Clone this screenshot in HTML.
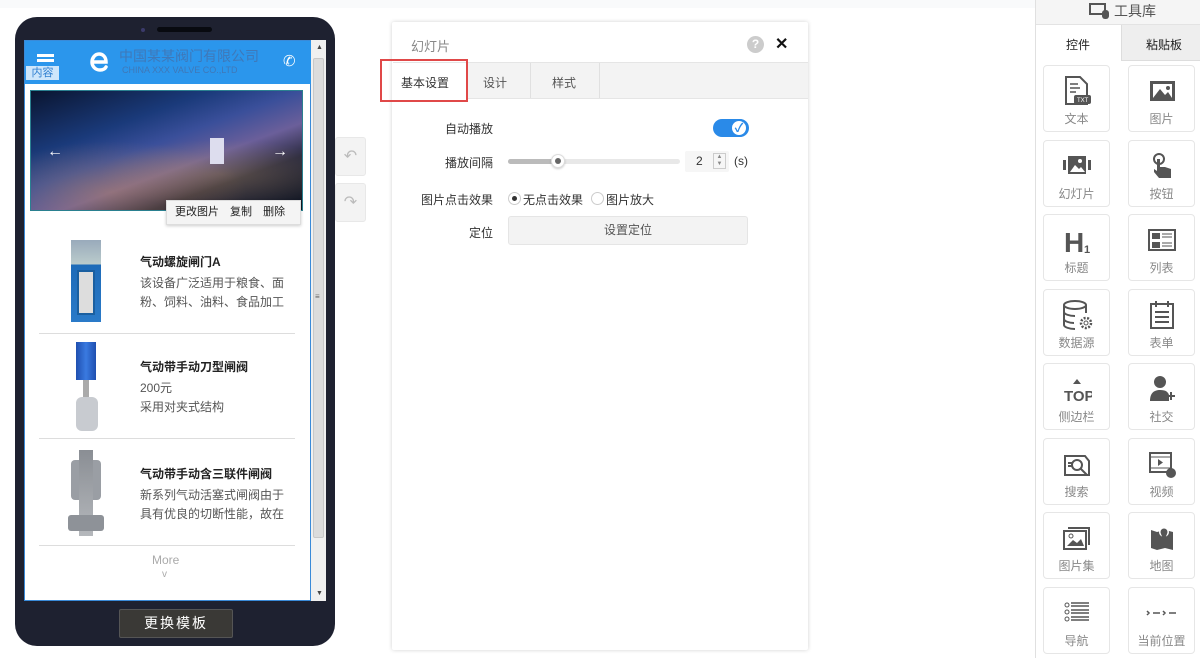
<!DOCTYPE html><html><head><meta charset="utf-8"><style>
*{margin:0;padding:0;box-sizing:border-box}
body{width:1200px;height:658px;position:relative;background:#fff;font-family:"Liberation Sans","Noto Sans CJK SC",sans-serif;overflow:hidden;color:#333}
.a{position:absolute}
.cell{position:absolute;width:67px;height:67px;border:1px solid #e6e6e6;border-radius:4px;background:#fff;text-align:center}
.cell .l{position:absolute;left:0;right:0;top:44px;font-size:12px;color:#888}
.cell svg{position:absolute;left:18px;top:9px}
.pt{font-size:12px;font-weight:bold;color:#222}
.pd{font-size:12px;color:#555;line-height:19px}
.lab{font-size:12px;color:#333;text-align:right;width:90px}
</style></head><body>
<div class="a" style="left:0;top:0;width:1035px;height:8px;background:#f9fafb"></div>
<!-- phone -->
<div class="a" style="left:15px;top:17px;width:320px;height:629px;background:#1e2130;border-radius:22px"></div>
<div class="a" style="left:157px;top:27px;width:55px;height:5px;background:#080a10;border-radius:3px"></div>
<div class="a" style="left:141px;top:28px;width:4px;height:4px;background:#3b3a6a;border-radius:50%"></div>
<div class="a" style="left:24px;top:40px;width:287px;height:561px;background:#fff;border:1px solid #3a8ad8"></div>
<div class="a" style="left:311px;top:40px;width:15px;height:561px;background:#f0f0f0"></div>
<div class="a" style="left:313px;top:58px;width:11px;height:480px;background:#dcdcdc;border-radius:2px;border:1px solid #c8c8c8"></div>
<div class="a" style="left:315px;top:292px;font-size:8px;color:#666">≡</div>
<div class="a" style="left:316px;top:44px;font-size:7px;color:#444">▲</div>
<div class="a" style="left:316px;top:590px;font-size:7px;color:#444">▼</div>
<div class="a" style="left:25px;top:41px;width:286px;height:43px;background:#2b96ec"></div>
<div class="a" style="left:37px;top:54px;width:17px;height:3px;background:#fff;box-shadow:0 5px 0 #fff"></div>
<div class="a" style="left:26px;top:66px;width:33px;height:14px;background:#cde6fb;color:#2e7fd0;font-size:11px;text-align:center;line-height:14px">内容</div>
<svg class="a" style="left:88px;top:49px" width="24" height="24"><path d="M5 13h13c0-5-3-8-7-8s-7 4-7 8 3 8 8 8c3 0 5-1 6-3" fill="none" stroke="#fff" stroke-width="3.5" stroke-linecap="round"/></svg>
<div class="a" style="left:119px;top:46px;font-size:14px;color:#3f78b8">中国某某阀门有限公司</div>
<div class="a" style="left:122px;top:65px;font-size:9px;color:#3f78b8">CHINA XXX VALVE CO.,LTD</div>
<div class="a" style="left:283px;top:52px;font-size:15px;color:#fff">✆</div>
<div class="a" style="left:30px;top:90px;width:273px;height:121px;border:1px solid #2a8090;background:linear-gradient(160deg,#0a1530 0%,#1a3a7a 30%,#3a4f9a 45%,#6b5f9a 60%,#2a2a40 75%,#101520 100%)"></div>
<div class="a" style="left:31px;top:120px;width:271px;height:90px;background:radial-gradient(ellipse at 30% 80%,rgba(220,150,70,.35),transparent 50%),radial-gradient(ellipse at 70% 60%,rgba(200,160,90,.3),transparent 45%)"></div>
<div class="a" style="left:210px;top:138px;width:14px;height:26px;background:#dde"></div>
<div class="a" style="left:47px;top:143px;font-size:16px;color:#fff">←</div>
<div class="a" style="left:272px;top:143px;font-size:16px;color:#fff">→</div>
<div class="a" style="left:166px;top:200px;width:135px;height:25px;background:#f4f4f4;border:1px solid #ddd;box-shadow:0 1px 3px rgba(0,0,0,.2);font-size:11px;color:#222;line-height:23px;padding-left:8px;word-spacing:8px">更改图片 复制 删除</div>
<!-- products -->
<div class="a" style="left:71px;top:240px;width:30px;height:82px;background:linear-gradient(#9ab 0,#bcc 30%,#1e6bb8 30%,#2a7ac8 100%)"></div>
<div class="a" style="left:77px;top:270px;width:18px;height:45px;background:#ddd;border:2px solid #1a5fa0"></div>
<div class="a pt" style="left:140px;top:253px">气动螺旋闸门A</div>
<div class="a pd" style="left:140px;top:274px">该设备广泛适用于粮食、面<br>粉、饲料、油料、食品加工</div>
<div class="a" style="left:39px;top:333px;width:256px;height:1px;background:#ddd"></div>
<div class="a" style="left:76px;top:342px;width:20px;height:38px;background:linear-gradient(90deg,#1f4fb0,#3a7ae0,#1f4fb0)"></div>
<div class="a" style="left:83px;top:380px;width:6px;height:18px;background:#aaa"></div>
<div class="a" style="left:76px;top:397px;width:22px;height:34px;background:#c8cbd0;border-radius:6px"></div>
<div class="a pt" style="left:140px;top:358px">气动带手动刀型闸阀</div>
<div class="a pd" style="left:140px;top:379px">200元<br>采用对夹式结构</div>
<div class="a" style="left:39px;top:438px;width:256px;height:1px;background:#ddd"></div>
<div class="a" style="left:71px;top:460px;width:30px;height:40px;background:#9a9ea4;border-radius:4px"></div>
<div class="a" style="left:79px;top:450px;width:14px;height:86px;background:linear-gradient(#8a8e94,#b5b8bc)"></div>
<div class="a" style="left:68px;top:515px;width:36px;height:16px;background:#8e9298;border-radius:3px"></div>
<div class="a pt" style="left:140px;top:465px">气动带手动含三联件闸阀</div>
<div class="a pd" style="left:140px;top:486px">新系列气动活塞式闸阀由于<br>具有优良的切断性能，故在</div>
<div class="a" style="left:39px;top:545px;width:256px;height:1px;background:#ddd"></div>
<div class="a" style="left:152px;top:553px;font-size:12px;color:#aaa">More</div>
<div class="a" style="left:162px;top:569px;font-size:10px;color:#aaa">v</div>
<div class="a" style="left:119px;top:609px;width:114px;height:29px;background:#3a3936;border:1px solid #555;border-radius:2px;color:#fff;font-size:14px;text-align:center;line-height:27px;letter-spacing:2px">更换模板</div>
<!-- undo redo -->
<div class="a" style="left:335px;top:137px;width:31px;height:39px;background:#f3f3f3;border:1px solid #e8e8e8;border-radius:3px;color:#bbb;font-size:16px;text-align:center;line-height:37px">↶</div>
<div class="a" style="left:335px;top:183px;width:31px;height:39px;background:#f3f3f3;border:1px solid #e8e8e8;border-radius:3px;color:#bbb;font-size:16px;text-align:center;line-height:37px">↷</div>
<!-- panel -->
<div class="a" style="left:392px;top:22px;width:416px;height:628px;background:#fff;box-shadow:0 0 4px rgba(0,0,0,.18);border-radius:2px"></div>
<div class="a" style="left:411px;top:36px;font-size:13px;color:#888">幻灯片</div>
<div class="a" style="left:747px;top:36px;width:17px;height:17px;border-radius:50%;background:#ccc;color:#fff;font-size:12px;text-align:center;line-height:17px;font-weight:bold">?</div>
<div class="a" style="left:775px;top:34px;font-size:16px;font-weight:bold;color:#111">✕</div>
<div class="a" style="left:393px;top:62px;width:415px;height:37px;background:#f3f3f3;border-top:1px solid #e5e5e5;border-bottom:1px solid #e5e5e5"></div>
<div class="a" style="left:393px;top:63px;width:75px;height:36px;background:#fff"></div>
<div class="a" style="left:467px;top:63px;width:64px;height:35px;border-right:1px solid #e0e0e0"></div>
<div class="a" style="left:531px;top:63px;width:69px;height:35px;border-right:1px solid #e0e0e0"></div>
<div class="a" style="left:380px;top:59px;width:88px;height:43px;border:2px solid #e04848"></div>
<div class="a" style="left:401px;top:74px;font-size:12px;color:#333">基本设置</div>
<div class="a" style="left:483px;top:74px;font-size:12px;color:#555">设计</div>
<div class="a" style="left:552px;top:74px;font-size:12px;color:#555">样式</div>
<div class="a lab" style="left:403px;top:120px">自动播放</div>
<div class="a" style="left:713px;top:119px;width:36px;height:18px;background:#2a8ae8;border-radius:9px"></div>
<div class="a" style="left:730px;top:119px;width:18px;height:18px;background:#fff;border:2px solid #2a8ae8;border-radius:50%;color:#2a8ae8;font-size:12px;text-align:center;line-height:14px;font-weight:bold">✓</div>
<div class="a lab" style="left:403px;top:154px">播放间隔</div>
<div class="a" style="left:508px;top:159px;width:172px;height:5px;background:#e8e8e8;border-radius:3px"></div>
<div class="a" style="left:508px;top:159px;width:50px;height:5px;background:#bbb;border-radius:3px"></div>
<div class="a" style="left:551px;top:154px;width:14px;height:14px;background:#fff;border:1px solid #ddd;border-radius:50%;box-shadow:0 1px 2px rgba(0,0,0,.2)"></div>
<div class="a" style="left:555px;top:158px;width:6px;height:6px;background:#666;border-radius:50%"></div>
<div class="a" style="left:685px;top:151px;width:44px;height:21px;background:#f6f6f6;border-radius:2px"></div>
<div class="a" style="left:696px;top:154px;font-size:12px">2</div>
<div class="a" style="left:713px;top:153px;width:13px;height:16px;border:1px solid #ccc;font-size:6px;color:#888;text-align:center;line-height:7px">▲<br>▼</div>
<div class="a" style="left:734px;top:154px;font-size:12px">(s)</div>
<div class="a lab" style="left:403px;top:191px">图片点击效果</div>
<div class="a" style="left:508px;top:192px;width:13px;height:13px;border:1px solid #ccc;border-radius:50%"></div>
<div class="a" style="left:512px;top:196px;width:5px;height:5px;background:#333;border-radius:50%"></div>
<div class="a" style="left:523px;top:191px;font-size:12px">无点击效果</div>
<div class="a" style="left:591px;top:192px;width:13px;height:13px;border:1px solid #ccc;border-radius:50%"></div>
<div class="a" style="left:606px;top:191px;font-size:12px">图片放大</div>
<div class="a lab" style="left:403px;top:224px">定位</div>
<div class="a" style="left:508px;top:216px;width:240px;height:29px;background:#f3f3f3;border:1px solid #e5e5e5;border-radius:3px;font-size:12px;color:#555;text-align:center;line-height:27px">设置定位</div>
<!-- right toolbox -->
<div class="a" style="left:1035px;top:0;width:165px;height:658px;background:#fff;border-left:1px solid #e0e0e0"></div>
<div class="a" style="left:1036px;top:0;width:164px;height:25px;background:#f5f5f5;border-bottom:1px solid #e3e3e3"></div>
<svg class="a" style="left:1089px;top:2px" width="22" height="18"><rect x="1" y="2" width="15" height="10" fill="none" stroke="#555" stroke-width="2"/><rect x="13" y="8" width="7" height="9" rx="3" fill="#555"/></svg>
<div class="a" style="left:1114px;top:1px;font-size:14px;color:#555">工具库</div>
<div class="a" style="left:1121px;top:25px;width:79px;height:36px;background:#eee;border-left:1px solid #ddd;border-bottom:1px solid #ddd"></div>
<div class="a" style="left:1066px;top:36px;font-size:12px;color:#222">控件</div>
<div class="a" style="left:1146px;top:36px;font-size:12px;color:#222">粘贴板</div>

<div class="cell" style="left:1043px;top:65px"><svg width="30" height="32"><path d="M4 2h14l7 7v20H4z" fill="none" stroke="#555" stroke-width="2"/><path d="M8 9h8M8 13h10M8 17h6" stroke="#555" stroke-width="1.5"/><rect x="12" y="20" width="17" height="9" rx="2" fill="#555"/><text x="15" y="27" font-size="6" fill="#fff" font-family="Liberation Sans">TXT</text></svg><div class="l">文本</div></div>
<div class="cell" style="left:1128px;top:65px"><svg width="30" height="32"><rect x="3" y="6" width="25" height="20" fill="#555"/><rect x="6" y="9" width="19" height="14" fill="#fff"/><path d="M6 23l7-9 5 6 3-3 4 6z" fill="#555"/><circle cx="21" cy="13" r="2" fill="#555"/></svg><div class="l">图片</div></div>
<div class="cell" style="left:1043px;top:140px"><svg width="30" height="32"><rect x="1" y="10" width="3" height="10" fill="#555"/><rect x="26" y="10" width="3" height="10" fill="#555"/><rect x="6" y="6" width="18" height="18" fill="#555"/><path d="M8 22l5-7 4 4 2-2 4 5z" fill="#fff"/><circle cx="18" cy="11" r="2" fill="#fff"/></svg><div class="l">幻灯片</div></div>
<div class="cell" style="left:1128px;top:140px"><svg width="30" height="32"><circle cx="12" cy="9" r="5" fill="none" stroke="#555" stroke-width="2"/><path d="M10 9v12l-3-2v3l5 6h12v-9l-6-2h-5V9z" fill="#555"/></svg><div class="l">按钮</div></div>
<div class="cell" style="left:1043px;top:214px"><svg width="30" height="32"><text x="2" y="28" font-size="28" font-weight="bold" fill="#555" font-family="Liberation Sans">H</text><text x="22" y="29" font-size="11" font-weight="bold" fill="#555" font-family="Liberation Sans">1</text></svg><div class="l">标题</div></div>
<div class="cell" style="left:1128px;top:214px"><svg width="30" height="32"><rect x="2" y="6" width="26" height="20" fill="none" stroke="#555" stroke-width="2"/><rect x="5" y="9" width="8" height="6" fill="#555"/><rect x="5" y="18" width="8" height="6" fill="#555"/><path d="M15 10h10M15 13h10M15 19h10M15 22h10" stroke="#555"/></svg><div class="l">列表</div></div>
<div class="cell" style="left:1043px;top:289px"><svg width="32" height="32"><ellipse cx="13" cy="6" rx="11" ry="4" fill="none" stroke="#555" stroke-width="2"/><path d="M2 6v20c0 2 5 4 11 4M24 6v8M2 13c0 2 5 4 11 4M2 20c0 2 5 4 10 4" fill="none" stroke="#555" stroke-width="2"/><circle cx="24" cy="24" r="5" fill="none" stroke="#555" stroke-width="2.5" stroke-dasharray="2 1.5"/><circle cx="24" cy="24" r="2" fill="none" stroke="#555"/></svg><div class="l">数据源</div></div>
<div class="cell" style="left:1128px;top:289px"><svg width="30" height="32"><rect x="4" y="5" width="22" height="24" fill="none" stroke="#555" stroke-width="2"/><path d="M9 2v6M21 2v6M8 13h14M8 18h14M8 23h14" stroke="#555" stroke-width="2"/></svg><div class="l">表单</div></div>
<div class="cell" style="left:1043px;top:363px"><svg width="30" height="32"><path d="M15 6l4 5h-8z" fill="#555"/><text x="2" y="28" font-size="15" font-weight="bold" fill="#555" font-family="Liberation Sans">TOP</text></svg><div class="l">侧边栏</div></div>
<div class="cell" style="left:1128px;top:363px"><svg width="30" height="32"><circle cx="13" cy="9" r="6" fill="#555"/><path d="M3 28c0-8 4-11 10-11s8 2 9 5v6z" fill="#555"/><path d="M24 19v8M20 23h8" stroke="#555" stroke-width="2"/></svg><div class="l">社交</div></div>
<div class="cell" style="left:1043px;top:438px"><svg width="30" height="32"><path d="M3 8h20l4 5v14H3z" fill="none" stroke="#555" stroke-width="2"/><circle cx="15" cy="17" r="5" fill="none" stroke="#555" stroke-width="2"/><path d="M19 21l6 6M6 15h4M6 18h4" stroke="#555" stroke-width="2"/></svg><div class="l">搜索</div></div>
<div class="cell" style="left:1128px;top:438px"><svg width="30" height="32"><rect x="3" y="5" width="21" height="19" fill="none" stroke="#555" stroke-width="2"/><path d="M3 9h21M3 20h21" stroke="#555"/><path d="M11 11v7l5-3.5z" fill="#555"/><circle cx="24" cy="25" r="5" fill="#555"/></svg><div class="l">视频</div></div>
<div class="cell" style="left:1043px;top:512px"><svg width="30" height="32"><rect x="2" y="9" width="22" height="18" fill="none" stroke="#555" stroke-width="2"/><path d="M6 6h21v17" fill="none" stroke="#555" stroke-width="2"/><path d="M5 24l6-6 4 3 4-4 3 7z" fill="#555"/><circle cx="9" cy="14" r="2" fill="none" stroke="#555"/></svg><div class="l">图片集</div></div>
<div class="cell" style="left:1128px;top:512px"><svg width="30" height="32"><path d="M4 8l6 2 8-2 8 2v18l-8-2-8 2-6-2z" fill="#555"/><circle cx="17" cy="10" r="5" fill="#fff"/><circle cx="17" cy="10" r="3.5" fill="#555"/><path d="M14 12l3 7 3-7" fill="#555"/></svg><div class="l">地图</div></div>
<div class="cell" style="left:1043px;top:587px"><svg width="30" height="32"><circle cx="5" cy="8" r="2" fill="none" stroke="#555"/><circle cx="5" cy="15" r="2" fill="none" stroke="#555"/><circle cx="5" cy="22" r="2" fill="none" stroke="#555"/><path d="M9 6h18M9 9h18M9 13h18M9 16h18M9 20h18M9 23h18" stroke="#555" stroke-width="1.5"/></svg><div class="l">导航</div></div>
<div class="cell" style="left:1128px;top:587px"><svg width="34" height="32" style="left:16px"><path d="M2 14l2 2-2 2M8 16h7M18 14l2 2-2 2M24 16h7" fill="none" stroke="#555" stroke-width="1.5"/></svg><div class="l">当前位置</div></div>
</body></html>
